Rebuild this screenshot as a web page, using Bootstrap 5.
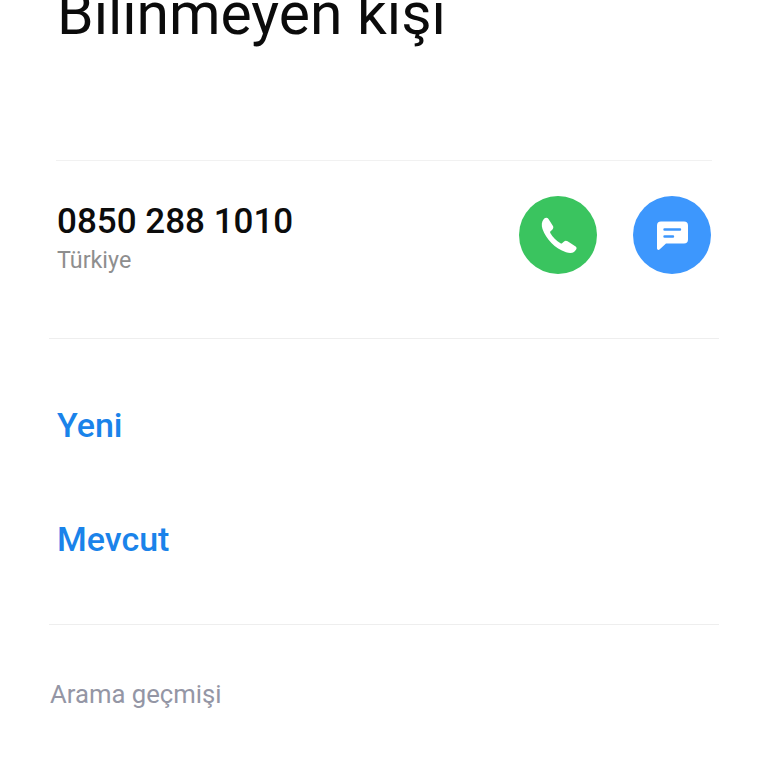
<!DOCTYPE html>
<html lang="tr">
<head>
<meta charset="utf-8">
<title>Kişi</title>
<link href="https://cdn.jsdelivr.net/npm/bootstrap@5.3.0/dist/css/bootstrap.min.css" rel="stylesheet">
<style>
html,body{height:768px;overflow:hidden;background:#fff;font-family:Roboto,"Liberation Sans",sans-serif}
.screen{height:768px;overflow:hidden}
.title-box{height:160px;padding-left:57px;margin:0;display:flow-root}
.title-text{font-size:58.800px;line-height:66px;font-weight:400;color:#0b0b0b;margin:-19px 0 0;}
.rule-a{height:1px;background:#f1f1f1;margin:0 56px}
.rule-b{height:1px;background:#eeeeee;margin:0 49px}
.num-row{height:177px;padding:35px 57px 0 57px}
.num-text{font-size:35px;line-height:48px;font-weight:500;color:#0c0c0c;padding-top:2px}
.sub-text{font-size:23.300px;line-height:28px;color:#8e8e8e}
.btn-gap{gap:36px}
.round-btn{width:78px;height:78px;border-radius:50%;border:0;padding:0}
.tone-g{background:#3ac45f}
.tone-b{background:#3d97fd}
.act-box{height:285px;padding:0 57px}
.act-text{font-size:34px;line-height:40px;font-weight:500;color:#1a83ea;height:40px;padding-top:66px;padding-bottom:8px;box-sizing:content-box}
.hist-text{font-size:25.700px;line-height:28px;color:#9496a5;padding:55px 0 0 50px}
</style>
</head>
<body>
<div class="screen">
  <div class="title-box"><h1 class="title-text">Bilinmeyen kişi</h1></div>
  <div class="rule-a"></div>
  <div class="num-row d-flex justify-content-between align-items-start">
    <div>
      <div class="num-text">0850 288 1010</div>
      <div class="sub-text">Türkiye</div>
    </div>
    <div class="d-flex btn-gap">
      <button class="round-btn tone-g d-flex align-items-center justify-content-center" aria-label="Ara">
        <svg width="38" height="38" viewBox="0 0 38 38"><path d="M5 2.800C6.500 1.500 8.500 1.500 9.500 3L13.800 9.800C14.800 11.300 14.300 12.800 13 14L11.500 15.300C11 15.800 11 16.300 11.300 17C13.500 21 17.500 25 21.500 27.300C22.200 27.700 22.800 27.600 23.300 27L24.800 25.700C26 24.600 27.300 24.500 28.600 25.300L36.300 30.200C37.800 31.200 38 32.800 36.800 34L35 36C33 37.500 30 37.300 27 36.300C16 32.500 7 23 3.500 13C2.300 9.500 2.500 5.500 5 2.800Z" fill="#fff"/></svg>
      </button>
      <button class="round-btn tone-b d-flex align-items-center justify-content-center" aria-label="Mesaj">
        <svg width="36" height="36" viewBox="0 0 36 36"><path d="M7 4.500h23a4 4 0 0 1 4 4v14a4 4 0 0 1-4 4H12L5.500 32.500a1.500 1.500 0 0 1-2.500-1.100V8.500a4 4 0 0 1 4-4z" fill="#fff"/><path d="M10.500 12.500h15.500M10.500 19.500h8.500" stroke="#3d97fd" stroke-width="2.400" stroke-linecap="round"/></svg>
      </button>
    </div>
  </div>
  <div class="rule-b"></div>
  <div class="act-box">
    <div class="act-text">Yeni</div>
    <div class="act-text">Mevcut</div>
  </div>
  <div class="rule-b"></div>
  <div class="hist-text">Arama geçmişi</div>
</div>
<script src="https://cdn.jsdelivr.net/npm/bootstrap@5.3.0/dist/js/bootstrap.bundle.min.js"></script>
</body>
</html>
